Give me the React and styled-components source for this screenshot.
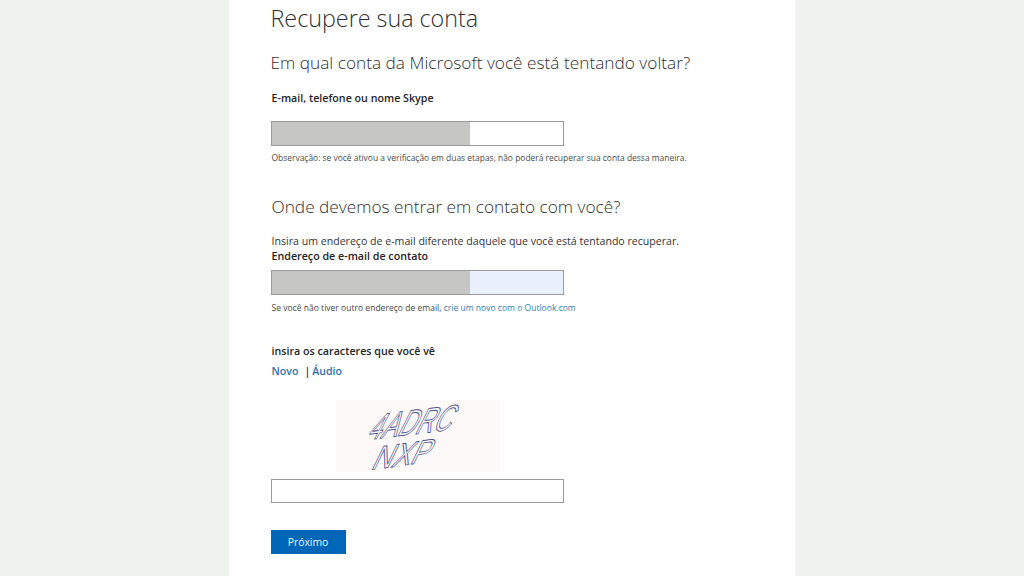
import React from "react";
import styled, { createGlobalStyle } from "styled-components";

const Global = createGlobalStyle`
  html, body { margin: 0; padding: 0; background: #f0f2ef; }
  body { font-family: "Open Sans", "Noto Sans", "Liberation Sans", sans-serif; overflow: hidden; }
  * { box-sizing: border-box; }
`;
const Page = styled.div`
  width: 1024px; height: 576px; display: flex; justify-content: center;
  padding-right: 1px; overflow: hidden;
`;
const Panel = styled.main`
  width: 566px; height: 576px; background: #fff; padding: 4px 0 0 42px;
  display: flex; flex-direction: column; align-items: flex-start;
  color: #2f2f2f;
`;
const Title = styled.h1`
  margin: 0; font-size: 23.3px; line-height: 28px; font-weight: 300; color: #303030;
`;
const Heading = styled.h2`
  margin: ${p => p.$top}px 0 0 ${p => p.$left || 0}px; font-size: 17.25px; line-height: 24px; font-weight: 300; color: #303030;
  white-space: nowrap;
`;
const Label = styled.div`
  margin: ${p => p.$top}px 0 0 1px; font-size: 10.7px; line-height: 14px; font-weight: 600; color: #262626; white-space: nowrap;
`;
const Field = styled.div`
  width: 293px; height: ${p => p.$h || 25}px; margin-top: ${p => p.$top}px; display: flex;
  border: 1px solid #9a9a9a; background: ${p => p.$bg || "#fff"};
`;
const Redaction = styled.div`
  width: 198px; background: #c6c7c5;
`;
const Note = styled.div`
  margin: ${p => p.$top}px 0 0 1px; font-size: ${p => p.$size || 8.45}px; line-height: 12px; color: #4a4a4a; white-space: nowrap;
`;
const Body = styled.div`
  margin: ${p => p.$top}px 0 0 1px; font-size: 10.6px; line-height: 14px; color: #333; white-space: nowrap;
`;
const A = styled.span`
  color: #2f7fb5;
`;
const LinkRow = styled.div`
  margin: 6px 0 0 1px; display: flex; align-items: center; font-size: 10.6px; line-height: 14px; font-weight: 600; color: #2a74ac; white-space: nowrap;
`;
const Sep = styled.span`
  margin: 0 2px 0 6px; color: #2b2b2b;
`;
const Captcha = styled.div`
  margin: 22px 0 0 65px; width: 163px; height: 72px; background: #fdf9f9;
`;
const CaptchaArt = styled.svg`
  display: block; overflow: visible;
`;
const CaptchaText = styled.text`
  font-family: "Liberation Sans", sans-serif; font-size: 30px; fill: none; stroke: #4f5590; stroke-width: 0.8;
`;
const Button = styled.button`
  margin-top: 27px; width: 75px; height: 24px; border: 0; padding: 0; background: #0067b8; color: #f2f7fb;
  font: 400 10.4px "Open Sans", sans-serif;
`;

export default function App() {
  return (
    <Page>
      <Global />
      <Panel>
        <Title>Recupere sua conta</Title>
        <Heading $top={19}>Em qual conta da Microsoft você está tentando voltar?</Heading>
        <Label $top={16}>E-mail, telefone ou nome Skype</Label>
        <Field $top={16}><Redaction /></Field>
        <Note $top={6}>Observação: se você ativou a verificação em duas etapas, não poderá recuperar sua conta dessa maneira.</Note>
        <Heading $top={31} $left={1}>Onde devemos entrar em contato com você?</Heading>
        <Body $top={15}>Insira um endereço de e-mail diferente daquele que você está tentando recuperar.</Body>
        <Label $top={1}>Endereço de e-mail de contato</Label>
        <Field $top={7} $bg="#e8f0fe"><Redaction /></Field>
        <Note $top={7} $size={8.55}>Se você não tiver outro endereço de email, <A>crie um novo com o Outlook.com</A></Note>
        <Label $top={30}>insira os caracteres que você vê</Label>
        <LinkRow>Novo<Sep>|</Sep>Áudio</LinkRow>
        <Captcha>
          <CaptchaArt width="163" height="72" viewBox="0 0 163 72" role="img" aria-label="captcha">
            <g transform="translate(30 40) rotate(-7) skewX(-34) scale(1,1.15)">
              <CaptchaText x="0" y="0" textLength="84" lengthAdjust="spacingAndGlyphs">4ADRC</CaptchaText>
            </g>
            <g transform="translate(34 70) rotate(-8) skewX(-34) scale(1,1.05)">
              <CaptchaText x="0" y="0" textLength="58" lengthAdjust="spacingAndGlyphs">NXP</CaptchaText>
            </g>
          </CaptchaArt>
        </Captcha>
        <Field $top={7} $h={24} />
        <Button>Próximo</Button>
      </Panel>
    </Page>
  );
}
